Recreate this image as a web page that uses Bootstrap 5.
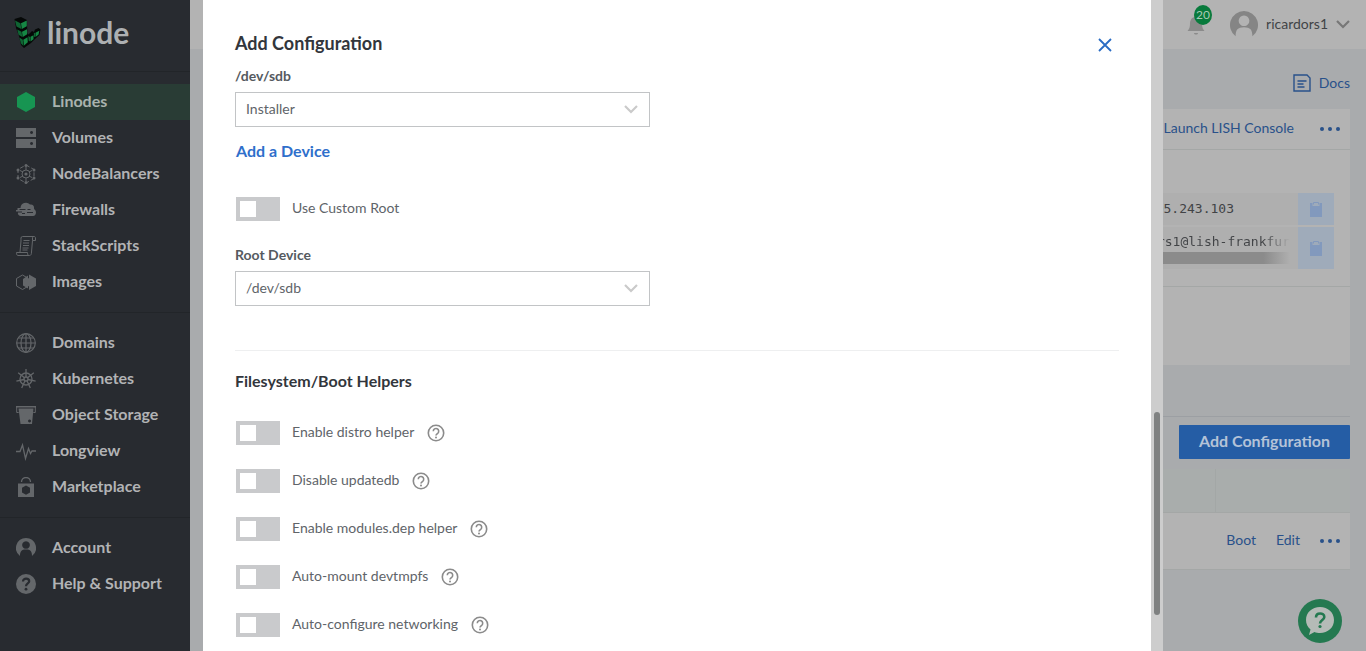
<!DOCTYPE html>
<html lang="en">
<head>
<meta charset="utf-8">
<meta name="viewport" content="width=device-width, initial-scale=1">
<title>Add Configuration | Linode</title>
<link href="https://cdn.jsdelivr.net/npm/bootstrap@5.3.0/dist/css/bootstrap.min.css" rel="stylesheet">
<style>
:root{--ink:#606469;--link:#29518a;--line:#a4a7a6;--panel:#b3b3b3}
html,body{height:100%}
body{font-family:Lato,sans-serif;font-size:14px;line-height:20px;color:var(--ink);background:#a9abad;overflow:hidden}
svg{display:block;flex:none}
/* sidebar */
.sidebar{width:190px;background:#282b30;flex:none}
.brand{height:72px;border-bottom:1px solid #222529;padding:0 14px 8px;color:#adb0b2;font-size:30px;line-height:32px;font-weight:700;gap:6px}
.sidebar .nav-link{height:36px;padding:0 16px;gap:16px;font-size:16px;line-height:20px;font-weight:700;color:#b2b3b5}
.sidebar .nav-link span{margin-bottom:2px}
.sidebar .nav-link svg{color:#64676a}
.sidebar .nav-link.active{background:#293c35;color:#a9b3ae}
.sidebar .nav-link.active svg{color:#179552}
.sidebar .nav{padding:12px 0;border-bottom:1px solid #222529}
.sidebar .nav:last-child{border:0}
/* page behind */
.topbar{height:49px;background:var(--panel);padding:0 16px}
.topbar .btn{color:#414447;font-size:14px;line-height:20px}
.topbar .btn span{margin-bottom:2px}
.topbar .alerts{color:#8b8b8b;margin-right:25px}
.alerts .count{position:absolute;left:7px;top:-9px;width:18px;height:20px;border-radius:50%;background:#087a3c;color:#a9c9b5;font-size:12px;line-height:20px;text-align:center}
.page-body{padding:16px}
.link-btn{color:var(--link);font-size:14px;line-height:20px;text-decoration:none;background:none;border:0;padding:0}
a.link-btn{margin-bottom:2px}
.panel{background:var(--panel)}
.panel-head{height:41px;border-bottom:1px solid var(--line);padding:0 10px;gap:26px}
.access{padding:43px 16px 17px;border-bottom:1px solid var(--line);gap:2px}
.access-row{background:#afafaf;width:400px;min-height:32px}
.access-row+.access-row{min-height:42px}
.mono{font-family:"DejaVu Sans Mono",monospace;font-size:13px;line-height:20px;color:#414346}
.copy-btn{width:36px;background:#9fabba;border:0;color:#8299bd;border-radius:0}
.fade-text{background:linear-gradient(90deg,#414346 80%,#afafaf);-webkit-background-clip:text;background-clip:text;color:transparent}
.fake-scroll{height:12px;background:linear-gradient(90deg,#8b8b8b 80%,#afafaf)}
.details{height:78px}
.config-bar{margin-top:51px;border-top:1px solid #9c9fa3;padding:8px 0 10px}
.add-btn,.add-btn:hover{background:#255da5;color:#b4c3d8}
.add-btn{font-size:16px;font-weight:700;line-height:20px;height:34px;width:171px;border:0;border-radius:1px;padding:0 0 2px}
.config-table{width:100%;background:var(--panel)}
.config-table th{height:43px;background:#a9adac;border-bottom:1px solid var(--line);border-right:1px solid #a3a7a6}
.config-table th:last-child{width:135px;border-right:0}
.config-table td{height:57px;padding:0 10px;border-bottom:1px solid var(--line)}
.row-actions{gap:20px}
.chat{position:fixed;right:24px;bottom:8px;width:44px;height:44px;border-radius:50%;background:#247950;border:0;padding:0}
/* dialog */
.dialog-wrap{position:fixed;inset:0;z-index:10;pointer-events:none}
.dialog{width:100%;max-width:960px;background:#fff;pointer-events:auto}
.dialog-main{padding:30px 32px 0}
.dialog-title{font-size:18px;line-height:26px;font-weight:700;color:#32363c}
.close-x{padding:8px 7px;border:0;background:none;color:#2a6cc4}
.field-label{font-size:14px;line-height:20px;font-weight:700;color:#555a5f;margin:6px 0}
.field{max-width:415px;height:35px;border:1px solid #c2c4c6;border-radius:0;font-size:14px;line-height:20px;padding:0 10px 2px;color:var(--ink);background:#fff url("data:image/svg+xml,%3Csvg xmlns='http://www.w3.org/2000/svg' viewBox='0 0 14 9'%3E%3Cpath d='M1 1l6 6 6-6' fill='none' stroke='%23cacaca' stroke-width='2.2'/%3E%3C/svg%3E") no-repeat right 11px center/14px 9px}
.add-device,.add-device:hover{color:#2f6fcb}
.add-device{font-weight:700;font-size:16px;line-height:20px;padding:0 1px;border:0;margin-top:14px}
.switch-row{height:24px;gap:12px;padding-left:1px}
.custom-root{margin:36px 0 24px}
.toggle{appearance:none;width:44px;height:24px;margin:0;flex:none;border:4px solid #c9cacc;background:linear-gradient(90deg,#fff 16px,#c9cacc 16px)}
.switch-row label{line-height:20px;margin-bottom:2px}
.help{border:0;background:none;padding:0;color:#8b8b8b;margin-left:1px}
.helpers{gap:24px;margin-top:30px}
.section-title{font-size:16px;line-height:20px;font-weight:700;color:#32363c;margin:0}
.rule{border-top:1px solid #eeeff0;margin:44px 0 20px}
.scroll-track{width:12px;background:#cdcdcd;flex:none;padding:0 3px}
.scroll-thumb{height:31.2vh;margin-top:63.3vh;border-radius:3px;background:#7f8181}
</style>
</head>
<body>
<svg class="d-none" xmlns="http://www.w3.org/2000/svg">
  <symbol id="help" viewBox="0 0 18 18"><g fill="none" stroke="currentColor" stroke-width="1.6"><circle cx="9" cy="9" r="7.7"/><path d="M6.3 7.3a2.7 2.7 0 1 1 4.4 2C9.600 10.100 9 10.400 9 11.500"/></g><circle cx="9" cy="13.400" r="1" fill="currentColor"/></symbol>
  <symbol id="dots" viewBox="0 0 20 6"><g fill="currentColor"><circle cx="2" cy="3" r="2"/><circle cx="10" cy="3" r="2"/><circle cx="18" cy="3" r="2"/></g></symbol>
  <symbol id="clip" viewBox="0 0 14 16"><path fill="currentColor" d="M1 2h2.500v3h7V2H13v14H1z"/><path fill="none" stroke="currentColor" d="M4.500 3.500v-2h5v2"/></symbol>
  <symbol id="person" viewBox="0 0 20 20"><path fill="currentColor" fill-rule="evenodd" d="M10 0a10 10 0 0 1 6 18c0-4.500-1.500-6.400-6-6.400S4 13.500 4 18A10 10 0 0 1 10 0zM10 3.200a3.800 3.800 0 1 0 .01 0z"/></symbol>
</svg>

<div class="d-flex h-100">
  <nav class="sidebar d-flex flex-column" aria-label="Main">
    <div class="brand d-flex align-items-center">
      <svg width="27" height="32" viewBox="0 0 27 32" aria-hidden="true">
        <path fill="#050807" d="M.5 3L7 1l6 3 .3 13 1.200 1.500L18 15l2 1 1-2.500 3.500-1.500 2 1.500-1 5.500-4.500 4-4 4-7 5-3-3-2-9-3-8z"/>
        <path fill="#0f6433" d="M1 4.500l5.500 2.700L7.300 13 2.500 10.500zM3.200 13.500L7.500 15.700l.8 5.300-3.800-2.200zM5.300 21.500l3.500 2.200.7 6.300L7 27.500zM14.300 20l1.700 1v4.500l-1.500-1zM19.800 16.500l1.200.8v4l-1-.8z"/>
        <path fill="#168744" d="M7 7.200l5.800-2.700v5.800L7.800 13zM8 15.700l5-2.500.2 5-4.500 2.800zM9.300 23.700l4.200-2.500.3 5-3.800 3.300zM16.500 20.800l3-1.600v4l-3 2.300zM21.500 16.800l3.800-2-.7 3.800-3.100 2.500z"/>
      </svg>
      <span>linode</span>
    </div>
    <div class="nav flex-column">
      <a class="nav-link active d-flex align-items-center" href="#"><svg width="20" height="20" viewBox="0 0 20 20"><path fill="currentColor" d="M10 0l9 5v10l-9 5-9-5V5z"/></svg><span>Linodes</span></a>
      <a class="nav-link d-flex align-items-center" href="#"><svg width="20" height="20" viewBox="0 0 20 20"><path fill="currentColor" fill-rule="evenodd" d="M0 0h20v9H0zM15.500 3a1.500 1.500 0 1 0 .1 0zM0 11h20v9H0zM15.500 14a1.500 1.500 0 1 0 .1 0z"/></svg><span>Volumes</span></a>
      <a class="nav-link d-flex align-items-center" href="#"><svg width="20" height="20" viewBox="0 0 20 20" fill="none" stroke="currentColor"><path stroke-dasharray="4 2" d="M10 1l8 4.500v9L10 19l-8-4.500v-9z"/><path d="M10 3v3M10 14v3M4 6.500l3 1.500M13 12l3 1.500M4 13.500L7 12M13 8l3-1.500"/><circle cx="10" cy="10" r="4"/><g fill="currentColor" stroke="none"><circle cx="10" cy="10" r="1.600"/><circle cx="10" cy="1.500" r="1.500"/><circle cx="10" cy="18.500" r="1.500"/><circle cx="2" cy="6" r="1.500"/><circle cx="18" cy="6" r="1.500"/><circle cx="2" cy="14" r="1.500"/><circle cx="18" cy="14" r="1.500"/></g></svg><span>NodeBalancers</span></a>
      <a class="nav-link d-flex align-items-center" href="#"><svg width="20" height="20" viewBox="0 0 20 20"><path fill="currentColor" d="M1.500 8h3a5.500 5.500 0 0 1 9.500-3.500c3-.5 4.500 1.500 4 4.500 3 1.500 2.500 7-1 7H5c-2.500 0-3.500-2-3-3.500h4v-1H0V10h1.500z"/><path stroke="#282b30" d="M3.500 9.500h6M11 12.500h6M6 13.500h3M11.500 9.500h3"/></svg><span>Firewalls</span></a>
      <a class="nav-link d-flex align-items-center" href="#"><svg width="20" height="20" viewBox="0 0 20 20" fill="none" stroke="currentColor"><path d="M16.500 4.500h3V2c0-1-.5-1.500-1.500-1.500H6.500C4.500.5 5 3 5 5L4 16M16.500 4.500V2c0-1 .5-1.500 1.500-1.500M16.500 4.500l-1 11.500c0 2-.5 3.500-2 3.500H2c-1 0-1.500-1-1.500-3h11c0 2 .5 3 1.500 3M7.500 4.500h6M7 7h6M7 9.500h6M6.500 12h6M6.500 14h5"/></svg><span>StackScripts</span></a>
      <a class="nav-link d-flex align-items-center" href="#"><svg width="20" height="20" viewBox="0 0 20 20"><path fill="none" stroke="currentColor" d="M6.500 3l6 3.500v7.500l-6 3.500-6-3.500V6.500z"/><path fill="currentColor" d="M7 7l5-3.500v13L7 13.500zM13 2.500l7 4v7.500l-7 4z"/></svg><span>Images</span></a>
    </div>
    <div class="nav flex-column">
      <a class="nav-link d-flex align-items-center" href="#"><svg width="20" height="20" viewBox="0 0 20 20" fill="none" stroke="currentColor" stroke-width="1.200"><circle cx="10" cy="10" r="9.300"/><ellipse cx="10" cy="10" rx="5" ry="9.300"/><path d="M10 .7v18.600M.7 10h18.600M2.500 5h15M2.500 15h15"/></svg><span>Domains</span></a>
      <a class="nav-link d-flex align-items-center" href="#"><svg width="20" height="20" viewBox="0 0 20 20" fill="none" stroke="currentColor" stroke-width="1.300"><circle cx="10" cy="10" r="6"/><circle cx="10" cy="10" r="2"/><path d="M10 0v8M8.500 8.800L2.200 3.800M8 10.500L.4 12.200M9 11.800L5.700 19M11 11.800l3.300 7.200M12 10.500l7.600 1.700M11.500 8.800l6.300-5"/></svg><span>Kubernetes</span></a>
      <a class="nav-link d-flex align-items-center" href="#"><svg width="20" height="20" viewBox="0 0 20 20"><path fill="currentColor" fill-rule="evenodd" d="M0 1h20v1.500H0zM2.500 3.500h15L16 19H4.500zM13.500 14.500a1.500 1.500 0 1 0 .1 0z"/><path fill="none" stroke="currentColor" d="M.7 2v5.500h2M19.300 2v5.500h-2"/></svg><span>Object Storage</span></a>
      <a class="nav-link d-flex align-items-center" href="#"><svg width="20" height="20" viewBox="0 0 20 20"><path fill="none" stroke="currentColor" stroke-width="1.300" d="M0 10.500h4l2.500-6.500 3 13.500 3-10 2 5 1.500-2.500h4"/></svg><span>Longview</span></a>
      <a class="nav-link d-flex align-items-center" href="#"><svg width="20" height="20" viewBox="0 0 20 20"><path fill="none" stroke="currentColor" stroke-width="1.300" d="M5.500 5a4.500 4.500 0 0 1 9 0"/><path fill="currentColor" fill-rule="evenodd" d="M2 6.500h16V20H2zM10 8.500l-4 2.300v4.600l4 2.300 4-2.300v-4.600z"/></svg><span>Marketplace</span></a>
    </div>
    <div class="nav flex-column">
      <a class="nav-link d-flex align-items-center" href="#"><svg width="20" height="20"><use href="#person"/></svg><span>Account</span></a>
      <a class="nav-link d-flex align-items-center" href="#"><svg width="20" height="20" viewBox="0 0 20 20"><circle cx="10" cy="10" r="10" fill="currentColor"/><path fill="none" stroke="#282b30" stroke-width="2.200" d="M7 7.500c0-4 6.200-3.600 6.200-.3C13.200 9.500 10 9.300 10 12.300"/><circle cx="10" cy="15.200" r="1.400" fill="#282b30"/></svg><span>Help &amp; Support</span></a>
    </div>
  </nav>

  <div class="flex-grow-1">
    <header class="topbar d-flex align-items-center justify-content-end">
      <button class="btn alerts position-relative border-0 p-0" aria-label="Notifications"><svg width="18" height="22" viewBox="0 0 18 22"><path fill="currentColor" d="M9 1c1 0 1.600 1 1.600 2C14 4 15 7 15 10c0 3 .8 5 2.500 7H.5C2.200 15 3 13 3 10c0-3 1-6 4.400-7 0-1 .6-2 1.600-2zM7 19h4c0 2-4 2-4 0z"/></svg><span class="count">20</span></button>
      <button class="btn border-0 p-0 d-flex align-items-center gap-2"><svg width="28" height="28" color="#858585"><use href="#person"/></svg><span>ricardors1</span><svg width="14" height="9" viewBox="0 0 14 9"><path d="M1 1l6 6 6-6" fill="none" stroke="#777" stroke-width="2.200"/></svg></button>
    </header>
    <main class="page-body">
      <div class="d-flex justify-content-end pt-2 pb-3">
        <a class="link-btn d-flex align-items-center gap-2 mb-0" href="#"><svg width="18" height="18" viewBox="0 0 18 18" fill="none" stroke="currentColor" stroke-width="1.400"><path d="M1 1h13l3 3v13H1zM4.500 7h9M4.500 10h6M4.500 13h7"/></svg>Docs</a>
      </div>
      <section class="panel">
        <div class="panel-head d-flex align-items-center justify-content-end">
          <a class="link-btn" href="#">Launch LISH Console</a>
          <button class="link-btn" aria-label="More actions"><svg width="20" height="6"><use href="#dots"/></svg></button>
        </div>
        <div class="access d-flex flex-column align-items-end">
          <div class="access-row d-flex justify-content-end align-items-stretch">
            <span class="mono align-self-center me-5 pe-3">95.243.103</span>
            <button class="copy-btn d-flex align-items-center justify-content-center" aria-label="Copy IP"><svg width="14" height="16"><use href="#clip"/></svg></button>
          </div>
          <div class="access-row d-flex justify-content-end align-items-stretch">
            <div class="align-self-center me-2"><div class="mono fade-text">rs1@lish-frankfur</div><div class="fake-scroll"></div></div>
            <button class="copy-btn d-flex align-items-center justify-content-center" aria-label="Copy LISH address"><svg width="14" height="16"><use href="#clip"/></svg></button>
          </div>
        </div>
        <div class="details"></div>
      </section>
      <div class="config-bar d-flex justify-content-end"><button class="btn add-btn">Add Configuration</button></div>
      <table class="config-table">
        <thead><tr><th></th><th></th></tr></thead>
        <tbody><tr><td colspan="2"><div class="row-actions d-flex justify-content-end align-items-center"><a class="link-btn" href="#">Boot</a><a class="link-btn" href="#">Edit</a><button class="link-btn" aria-label="More actions"><svg width="20" height="6"><use href="#dots"/></svg></button></div></td></tr></tbody>
      </table>
    </main>
  </div>
</div>
<button class="chat" aria-label="Help chat"><svg width="44" height="44" viewBox="0 0 44 44"><path fill="#b5bbb7" d="M22 8c8 0 14 5.500 14 13s-6 13-14 13c-2 0-4-.4-5.500-1L11 36l1.500-5.500C9.500 28 8 25 8 21c0-7.500 6-13 14-13z"/><path fill="none" stroke="#247950" stroke-width="2.600" d="M18 18.500c0-5.500 8.300-5 8.300-.5 0 3-4.300 3-4.300 6.500"/><circle cx="22" cy="27.500" r="1.600" fill="#247950"/></svg></button>

<div class="dialog-wrap d-flex justify-content-center">
  <div class="dialog d-flex overflow-hidden" role="dialog" aria-labelledby="dlg-title">
    <form class="dialog-main flex-grow-1">
      <div class="d-flex justify-content-between align-items-start">
        <h1 class="dialog-title m-0" id="dlg-title">Add Configuration</h1>
        <button type="button" class="close-x" aria-label="Close"><svg width="14" height="14" viewBox="0 0 14 14"><path d="M1 1l12 12M13 1L1 13" stroke="currentColor" stroke-width="1.800"/></svg></button>
      </div>
      <label class="field-label d-block" for="sdb">/dev/sdb</label>
      <select class="form-select field" id="sdb"><option>Installer</option></select>
      <button type="button" class="btn add-device d-block">Add a Device</button>
      <div class="switch-row custom-root d-flex align-items-center"><input class="toggle" type="checkbox" role="switch" id="s0"><label for="s0">Use Custom Root</label></div>
      <label class="field-label d-block" for="root">Root Device</label>
      <select class="form-select field" id="root"><option>/dev/sdb</option></select>
      <div class="rule"></div>
      <h2 class="section-title">Filesystem/Boot Helpers</h2>
      <div class="helpers d-flex flex-column">
        <div class="switch-row d-flex align-items-center"><input class="toggle" type="checkbox" role="switch" id="s1"><label for="s1">Enable distro helper</label><button type="button" class="help" aria-label="Help"><svg width="18" height="18"><use href="#help"/></svg></button></div>
        <div class="switch-row d-flex align-items-center"><input class="toggle" type="checkbox" role="switch" id="s2"><label for="s2">Disable updatedb</label><button type="button" class="help" aria-label="Help"><svg width="18" height="18"><use href="#help"/></svg></button></div>
        <div class="switch-row d-flex align-items-center"><input class="toggle" type="checkbox" role="switch" id="s3"><label for="s3">Enable modules.dep helper</label><button type="button" class="help" aria-label="Help"><svg width="18" height="18"><use href="#help"/></svg></button></div>
        <div class="switch-row d-flex align-items-center"><input class="toggle" type="checkbox" role="switch" id="s4"><label for="s4">Auto-mount devtmpfs</label><button type="button" class="help" aria-label="Help"><svg width="18" height="18"><use href="#help"/></svg></button></div>
        <div class="switch-row d-flex align-items-center"><input class="toggle" type="checkbox" role="switch" id="s5"><label for="s5">Auto-configure networking</label><button type="button" class="help" aria-label="Help"><svg width="18" height="18"><use href="#help"/></svg></button></div>
      </div>
    </form>
    <div class="scroll-track" aria-hidden="true"><div class="scroll-thumb"></div></div>
  </div>
</div>
<script src="https://cdn.jsdelivr.net/npm/bootstrap@5.3.0/dist/js/bootstrap.bundle.min.js"></script>
</body>
</html>
